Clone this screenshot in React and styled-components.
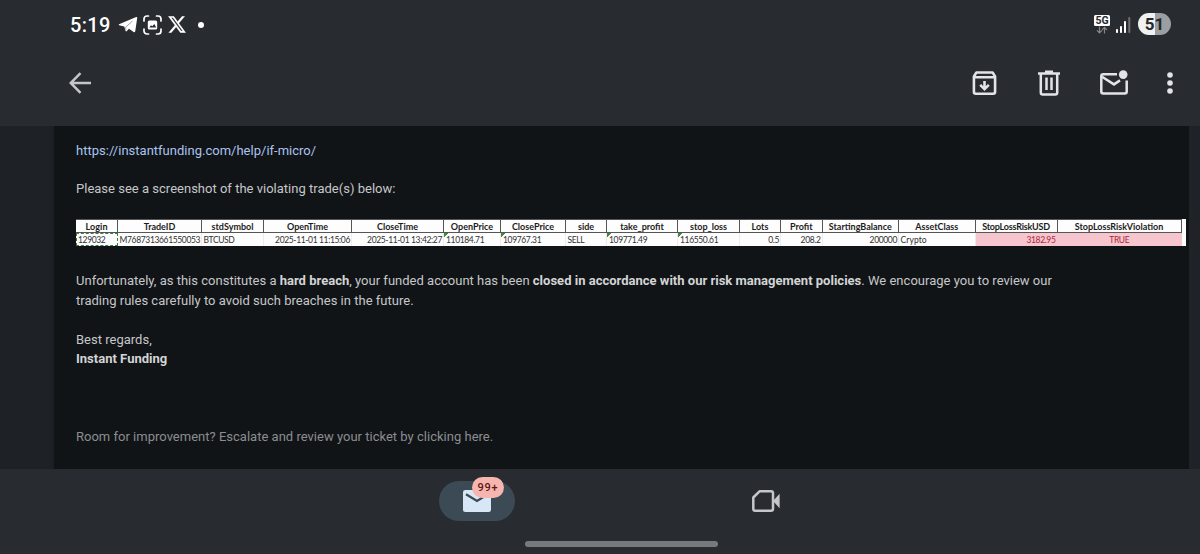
import React from 'react';
import styled, { createGlobalStyle } from 'styled-components';

const GlobalStyle = createGlobalStyle`
    * {
        box-sizing: border-box;
    }
    body {
        margin: 0;
        background: #282b30;
        font-family: Roboto, "Liberation Sans", sans-serif;
    }
    p {
        margin: 0;
    }
    svg {
        display: block;
        flex: none;
    }
`;

const Screen = styled.div`
    display: flex;
    flex-direction: column;
    width: 1200px;
    height: 554px;
    overflow: hidden;
    background: #282b30;
`;

const StatusBar = styled.div`
    display: flex;
    justify-content: space-between;
    align-items: center;
    height: 48px;
    padding: 1px 29px 0 70px;
    color: #fff;
`;

const StatusGroup = styled.div`
    display: flex;
    align-items: center;
`;

const Clock = styled.span`
    width: 48px;
    font-size: 20px;
    font-weight: 500;
    line-height: 22px;
    letter-spacing: 0.3px;
`;

const Dot = styled.span`
    width: 6px;
    height: 6px;
    margin-left: 12px;
    border-radius: 50%;
    background: #fff;
`;

const Network = styled.div`
    display: flex;
    flex-direction: column;
    align-items: center;
    width: 16px;
    margin: 0 6px 1px 0;
`;

const NetworkLabel = styled.span`
    width: 16px;
    height: 11px;
    border-radius: 1.5px;
    background: #fff;
    color: #282b30;
    font-size: 10.5px;
    font-weight: 700;
    line-height: 11.5px;
    text-align: center;
`;

const Battery = styled.span`
    width: 33px;
    height: 22px;
    margin: 0 0 1px 7px;
    border-radius: 11px;
    background: linear-gradient(90deg, #f0f1f1 51%, #9c9fa1 51%);
    color: #25282c;
    font-size: 17px;
    font-weight: 700;
    line-height: 22.5px;
    text-align: center;
`;

const Toolbar = styled.div`
    display: flex;
    justify-content: space-between;
    align-items: center;
    height: 78px;
    padding: 0 27px 8px 69px;
    color: #e2e4ea;
`;

const Actions = styled.div`
    display: flex;
    align-items: center;
`;

const IconButton = styled.button`
    display: flex;
    padding: 0;
    margin: 0 0 0 ${props => props.$gap || 0}px;
    border: 0;
    background: none;
    color: inherit;
`;

const Main = styled.main`
    display: grid;
    grid-template-columns: 54px 1135px 11px;
    height: 343px;
`;

const Rail = styled.div`
    background: ${props => props.$right ? '#1f2226' : 'linear-gradient(90deg, #1e2125 48px, #1b1e22 54px)'};
`;

const Message = styled.article`
    padding: 14.5px 0 0 22px;
    background: #111417;
    color: #c6c7c9;
    font-size: 13px;
    line-height: 19.5px;
    white-space: nowrap;
`;

const Line = styled.p`
    height: 19.5px;
    margin-top: ${props => props.$before || 0}px;
    color: ${props => props.$muted ? '#8b8d90' : 'inherit'};
    letter-spacing: 0.01px;
    b {
        font-weight: 700;
        color: #d3d4d5;
    }
`;

const Link = styled.a`
    color: #aac3f0;
    text-decoration: none;
`;

const Sheet = styled.div`
    display: grid;
    grid-template-columns: ${props => props.$columns};
    grid-template-rows: 14px 13px;
    width: 1110px;
    height: 27px;
    margin-top: 20px;
    background: #fdfdfd;
    color: #303030;
    font-family: Lato, "Liberation Sans", sans-serif;
    font-size: 9px;
`;

const HeadCell = styled.div`
    border: solid #555;
    border-width: 1px 1px 1px 0;
    color: #1c1c1c;
    font-weight: 700;
    line-height: 13px;
    text-align: center;
    letter-spacing: ${props => props.$spacing || 0}px;
`;

const DataCell = styled.div`
    padding: 0 1px 0 ${props => props.$flag ? 2 : 1.5}px;
    border-right: 1px solid ${props => props.$bad ? 'transparent' : '#ececec'};
    background: ${props => props.$bad ? '#f7c5cd' : props.$flag
        ? 'linear-gradient(135deg, #3f8a3f 3px, transparent 3.2px)' : 'transparent'};
    color: ${props => props.$bad ? '#a8283c' : 'inherit'};
    font-size: 8.5px;
    line-height: 14px;
    text-align: ${props => props.$align || 'left'};
    letter-spacing: ${props => props.$spacing || -0.36}px;
    ${props => props.$selected && `
        border: 1px dashed #3c7a4c;
        line-height: 12px;
        padding-left: 1px;
    `}
`;

const BottomNav = styled.nav`
    display: flex;
    height: 63px;
    padding: 12px 0 0 439px;
`;

const MailTab = styled.div`
    position: relative;
    display: flex;
    justify-content: center;
    align-items: center;
    width: 76px;
    height: 40px;
    border-radius: 20px;
    background: #3c4a55;
`;

const Badge = styled.span`
    position: absolute;
    top: -4px;
    left: 33px;
    width: 32px;
    height: 21px;
    border-radius: 11px;
    background: #f6b5ae;
    color: #5f1512;
    font-size: 11px;
    font-weight: 500;
    line-height: 22px;
    letter-spacing: 0.8px;
    text-align: center;
`;

const MeetTab = styled.div`
    display: flex;
    align-items: center;
    height: 40px;
    margin-left: 237px;
`;

const HomeBar = styled.div`
    width: 193px;
    height: 6px;
    margin: 9px 0 0 525px;
    border-radius: 3px;
    background: #777a7d;
`;

const columns = [
    { name: 'Login', width: 42, value: '129032', selected: true, headSpacing: 0.1 },
    { name: 'TradeID', width: 84, value: 'M7687313661550053' },
    { name: 'stdSymbol', width: 62, value: 'BTCUSD' },
    { name: 'OpenTime', width: 88, value: '2025-11-01 11:15:06', align: 'right' },
    { name: 'CloseTime', width: 92, value: '2025-11-01 13:42:27', align: 'right' },
    { name: 'OpenPrice', width: 57, value: '110184.71', flag: true },
    { name: 'ClosePrice', width: 65, value: '109767.31', flag: true },
    { name: 'side', width: 41, value: 'SELL' },
    { name: 'take_profit', width: 71, value: '109771.49', flag: true },
    { name: 'stop_loss', width: 62, value: '116550.61', flag: true },
    { name: 'Lots', width: 41, value: '0.5', align: 'right' },
    { name: 'Profit', width: 41.5, value: '208.2', align: 'right' },
    { name: 'StartingBalance', width: 76.5, value: '200000', align: 'right' },
    { name: 'AssetClass', width: 76.5, value: 'Crypto', spacing: 0.1 },
    { name: 'StopLossRiskUSD', width: 82, value: '3182.95', align: 'right', bad: true, headSpacing: -0.2 },
    { name: 'StopLossRiskViolation', width: 124, value: 'TRUE', align: 'center', bad: true }
];

const TelegramIcon = () => (
    <svg width="20" height="18" viewBox="0 0 20 18">
        <path d="M1 8.200 18.200 1.100q1.200-.3 1 1L17.200 15.500q-.4 1.300-1.600.5L11 12.800l-2.200 2.300q-1 .8-1.300-.4L6.300 10.600 1.100 9.200q-.8-.5-.1-1z" fill="#fff" />
        <path d="M14.500 5 7.600 11.200l.4 2.600" fill="none" stroke="#85888b" strokeWidth=".8" />
    </svg>
);

const CaptureIcon = () => (
    <svg width="19" height="20" viewBox="0 0 19 20" fill="none" stroke="#fff" strokeWidth="1.700" strokeLinecap="round">
        <path d="M1 6V4a3 3 0 0 1 3-3h1.500M13.500 1H15a3 3 0 0 1 3 3v2M18 14v2a3 3 0 0 1-3 3h-1.500M5.500 19H4a3 3 0 0 1-3-3v-2" />
        <rect x="4.800" y="5.500" width="9.400" height="9" rx="1.500" fill="#fff" stroke="none" />
        <path d="M6.300 12.600 8 10.200l1.300 1 2-2.200 1.900 3.600z" fill="#282b30" stroke="none" />
    </svg>
);

const XIcon = () => (
    <svg width="18" height="17" viewBox="1 1 22 20" preserveAspectRatio="none" fill="#fff" stroke="#fff" strokeWidth=".2">
        <path d="M18.244 1.250h3.308l-7.227 8.260 8.502 11.240H16.170l-5.214-6.817L4.990 20.750H1.680l7.730-8.835L1.254 1.250H8.080l4.713 6.231zm-1.161 17.520h1.833L7.084 3.126H5.117z" />
    </svg>
);

const DataArrows = () => (
    <svg width="12" height="8" viewBox="0 0 12 8" fill="none" stroke="#85888b" strokeWidth="1.200">
        <path d="M3.500 .5v6.200M1 4.400 3.500 6.900 6 4.400M8.500 7.500V1.500M6 3.900 8.500 1.400 11 3.900" />
    </svg>
);

const SignalIcon = () => (
    <svg width="15" height="16" viewBox="0 0 15 16" fill="#fff">
        <rect x="0" y="12" width="2" height="4" rx=".8" />
        <rect x="4" y="9" width="2" height="7" rx=".8" />
        <rect x="8" y="4" width="2" height="12" rx=".8" />
        <rect x="12.300" y="0" width="2" height="16" rx=".8" fill="#6d7073" />
    </svg>
);

const BackIcon = () => (
    <svg width="22" height="22" viewBox="0 0 22 22" fill="none" stroke="#c3c5c9" strokeWidth="2.500">
        <path d="M22 11H2M11.500 1.200 1.700 11l9.800 9.800" />
    </svg>
);

const ArchiveIcon = () => (
    <svg width="25" height="26" viewBox="0 0 26 26" fill="none" stroke="currentColor" strokeWidth="2.700">
        <path d="M2 6.200 4.600 2h16.800L24 6.200v15.900q0 2-2 2H4q-2 0-2-2zM2 7h22" strokeLinejoin="round" />
        <path d="M13 11v8.500M8.500 15 13 19.400 17.500 15" />
    </svg>
);

const TrashIcon = () => (
    <svg width="22" height="26" viewBox="0 0 22 26" fill="none" stroke="currentColor" strokeWidth="2.500">
        <path d="M0 3.500h22M7 1.800h8M2.800 3v19.600q0 2 2 2h12.400q2 0 2-2V3M8.500 7.500v12.500M13.500 7.500v12.500" />
    </svg>
);

const UnreadIcon = () => (
    <svg width="28" height="26" viewBox="0 0 28 26" fill="none" stroke="currentColor" strokeWidth="2.500">
        <path d="M17 4.300H3.300q-2 0-2 2v15.200q0 2 2 2h21.400q2 0 2-2V10.500" />
        <path d="M2 6.800l12 7.600 6-4" />
        <circle cx="23.200" cy="4.600" r="4.300" fill="currentColor" stroke="none" />
    </svg>
);

const MoreIcon = () => (
    <svg width="6" height="22" viewBox="0 0 6 22" fill="currentColor">
        <circle cx="3" cy="3" r="2.800" />
        <circle cx="3" cy="11" r="2.800" />
        <circle cx="3" cy="19" r="2.800" />
    </svg>
);

const MailIcon = () => (
    <svg width="28" height="22" viewBox="0 0 28 22">
        <rect width="28" height="22" rx="2.300" fill="#d8e7f6" />
        <path d="M3 4.200 14 11l11-6.800" fill="none" stroke="#3c4a55" strokeWidth="2.300" />
    </svg>
);

const MeetIcon = () => (
    <svg width="28" height="22" viewBox="0 0 28 22">
        <path d="M7.500 1.300H19q2 0 2 2v15.400q0 2-2 2H3.300q-2 0-2-2V7.500z" fill="none" stroke="#c4c6ca" strokeWidth="2.500" strokeLinejoin="round" />
        <path d="M21 11 27.600 3.800v14.400z" fill="#c4c6ca" />
    </svg>
);

const TradeSheet = () => (
    <Sheet $columns={columns.map(column => `${column.width}px`).join(' ')}>
        {columns.map(column => (
            <HeadCell key={column.name} $spacing={column.headSpacing}>{column.name}</HeadCell>
        ))}
        {columns.map(column => (
            <DataCell
                key={column.name}
                $align={column.align}
                $flag={column.flag}
                $bad={column.bad}
                $selected={column.selected}
                $spacing={column.spacing}
            >
                {column.value}
            </DataCell>
        ))}
    </Sheet>
);

const App = () => (
    <Screen>
        <GlobalStyle />
        <StatusBar>
            <StatusGroup>
                <Clock>5:19</Clock>
                <TelegramIcon />
                <IconButton as="span" $gap={5}><CaptureIcon /></IconButton>
                <IconButton as="span" $gap={6}><XIcon /></IconButton>
                <Dot />
            </StatusGroup>
            <StatusGroup>
                <Network>
                    <NetworkLabel>5G</NetworkLabel>
                    <DataArrows />
                </Network>
                <SignalIcon />
                <Battery>51</Battery>
            </StatusGroup>
        </StatusBar>
        <Toolbar>
            <IconButton><BackIcon /></IconButton>
            <Actions>
                <IconButton><ArchiveIcon /></IconButton>
                <IconButton $gap={41}><TrashIcon /></IconButton>
                <IconButton $gap={40}><UnreadIcon /></IconButton>
                <IconButton $gap={39}><MoreIcon /></IconButton>
            </Actions>
        </Toolbar>
        <Main>
            <Rail />
            <Message>
                <Line><Link>https://instantfunding.com/help/if-micro/</Link></Line>
                <Line $before={19}>Please see a screenshot of the violating trade(s) below:</Line>
                <TradeSheet />
                <Line $before={25}>
                    Unfortunately, as this constitutes a <b>hard breach</b>, your funded account has been <b>closed in accordance with our risk management policies</b>. We encourage you to review our
                </Line>
                <Line $before={0.5}>trading rules carefully to avoid such breaches in the future.</Line>
                <Line $before={19.5}>Best regards,</Line>
                <Line><b>Instant Funding</b></Line>
                <Line $before={58} $muted>Room for improvement? Escalate and review your ticket by clicking here.</Line>
            </Message>
            <Rail $right />
        </Main>
        <BottomNav>
            <MailTab>
                <MailIcon />
                <Badge>99+</Badge>
            </MailTab>
            <MeetTab><MeetIcon /></MeetTab>
        </BottomNav>
        <HomeBar />
    </Screen>
);

export default App;
